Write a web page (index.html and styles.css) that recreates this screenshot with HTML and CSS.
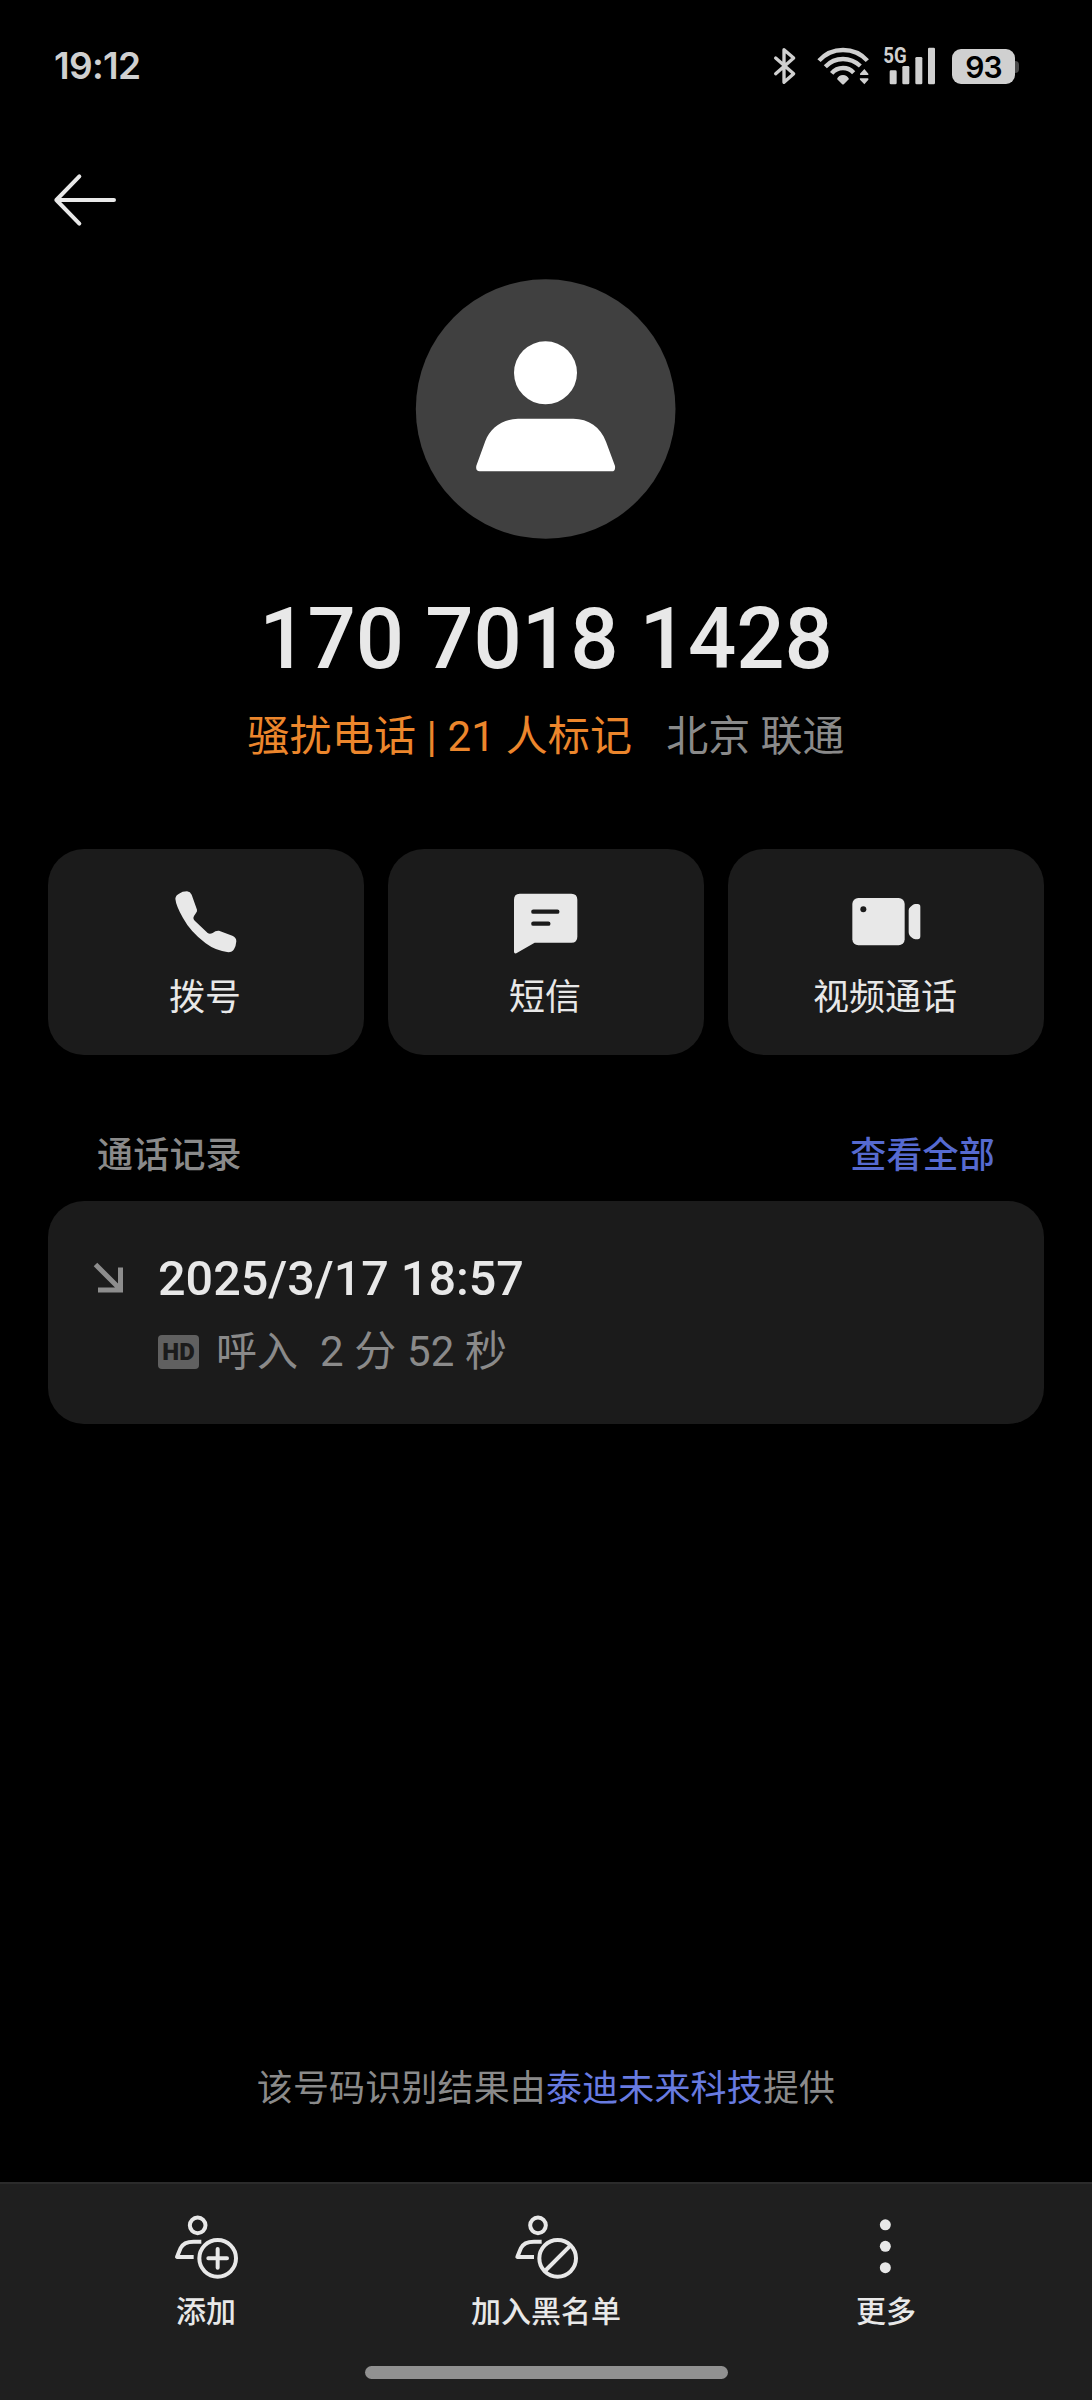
FILE: index.html
```html
<!DOCTYPE html>
<html lang="zh-CN">
<head>
<meta charset="utf-8">
<title>170 7018 1428</title>
<link rel="stylesheet" href="styles.css">
</head>
<body>
<div class="screen">
  <header class="status">
    <span class="clock">19:12</span>
    <div class="status-icons">
      <svg class="bluetooth" width="22" height="38" viewBox="72 80 66 114"><path d="M77 113 L131 160 L102 186 V88 L131 113 L77 160" fill="none" stroke="#d0d0d0" stroke-width="10" stroke-linejoin="round" stroke-linecap="round"/></svg>
      <svg class="wifi" width="53" height="38" viewBox="201 80 159 114">
        <g fill="none" stroke="#d0d0d0" stroke-width="13">
          <path d="M207 121 Q236 89 279 89 Q323 89 352 121"/>
          <path d="M226 139 Q248 116 279 116 Q308 116 331 137"/>
          <path d="M245 159 Q258 143 279 143 Q298 143 311 157"/>
        </g>
        <path fill="#d0d0d0" d="M261 176 Q266 164 279 164 Q291 164 297 176 L282 191 Q279 194 276 191Z M343 146 L355 160 Q357 164 353 164 H332 Q329 164 330 160Z M331 174 H353 Q357 175 355 178 L343 192 L330 178 Q328 174 331 174Z"/>
      </svg>
      <svg class="signal" width="53" height="39" viewBox="398 77 159 117">
        <g fill="#d0d0d0"><rect x="418" y="150" width="21" height="42" rx="4"/><rect x="456" y="137" width="21" height="55" rx="4"/><rect x="495" y="110" width="21" height="82" rx="4"/><rect x="533" y="82" width="21" height="110" rx="4"/></g>
        <text class="network" x="399" y="127" textLength="70" lengthAdjust="spacingAndGlyphs">5G</text>
      </svg>
      <div class="battery"><span class="battery-level">93</span><i class="battery-tip"></i></div>
    </div>
  </header>

  <nav class="back">
    <svg width="62" height="52" viewBox="161 460 186 156"><path d="M237 467 L168 538 L237 609 M168 538 H341" fill="none" stroke="#e8e8e8" stroke-width="12" stroke-linecap="round" stroke-linejoin="round"/></svg>
  </nav>

  <section class="profile">
    <svg class="avatar" width="260" height="260" viewBox="48 56 780 780">
      <circle cx="437" cy="446" r="389.500" fill="#404040"/>
      <circle cx="436.500" cy="337.500" r="94.500" fill="#fff"/>
      <path fill="#fff" d="M354 475 H520 C565 475 602 500 618 544 L645 617 Q647 633 635 633 H239 Q226 633 229 616 L256 542 C270 505 305 477 354 475Z"/>
    </svg>
    <h1 class="number">170 7018 1428</h1>
    <p class="caption"><span class="tag">骚扰电话 | 21 人标记</span><span class="place">北京 联通</span></p>
  </section>

  <section class="actions">
    <div class="action">
      <svg width="62" height="62" viewBox="434 181 186 186"><path fill="#e8e8e8" d="M446 189 Q456 182 470 182 Q480 183 484 192 L500 237 Q501 242 497 247 Q490 256 489 262 Q490 268 494 271 L532 307 Q538 312 547 307 Q556 299 566 300 L606 315 Q618 320 618 332 Q617 346 611 356 Q606 365 594 365 Q555 360 526 338 Q480 303 458 262 Q437 225 435 204 Q436 194 446 189Z"/></svg>
      <span>拨号</span>
    </div>
    <div class="action">
      <svg width="64" height="62" viewBox="431 182 192 186"><path fill="#e8e8e8" d="M448 190 H603 Q621 190 621 208 V319 Q621 337 603 337 H493 L438 369 Q431 371 431 364 V208 Q431 190 448 190Z"/><path d="M489 244 H561 M489 280 H534" stroke="#1b1b1b" stroke-width="13" stroke-linecap="round"/></svg>
      <span>短信</span>
    </div>
    <div class="action">
      <svg width="69" height="62" viewBox="428 182 207 186"><rect x="429" y="203" width="157" height="142" rx="18" fill="#e8e8e8"/><circle cx="462" cy="237" r="9" fill="#1b1b1b"/><path fill="#e8e8e8" d="M618 221 H625 Q633 221 633 229 V318 Q633 327 625 327 H618 Q612 326 608 322 L602 317 Q598 313 598 306 V240 Q598 234 603 230 L610 224 Q614 221 618 221Z"/></svg>
      <span>视频通话</span>
    </div>
  </section>

  <div class="section-head"><h2>通话记录</h2><a class="link">查看全部</a></div>
  <section class="log">
    <svg class="incoming" width="30" height="30" viewBox="0 0 30 30"><path d="M1.500 1.500 L26 26 M26.500 4.500 V27 H4" fill="none" stroke="#8d8d8d" stroke-width="5"/></svg>
    <div class="log-body">
      <div class="log-date">2025/3/17 18:57</div>
      <div class="log-detail"><span class="hd">HD</span><span>呼入</span><span class="duration">2 分 52 秒</span></div>
    </div>
  </section>

  <p class="source">该号码识别结果由<a>泰迪未来科技</a>提供</p>

  <footer class="toolbar">
    <div class="tools">
      <div class="tool">
        <svg width="64" height="64" viewBox="225 135 192 192"><g fill="none" stroke="#e8e8e8" stroke-width="12"><circle cx="296" cy="166" r="23.500"/><path d="M307 215 H284 Q254 215 245 234 Q239 248 234 261 H284" stroke-linejoin="round"/><circle cx="356" cy="265" r="55"/><path d="M328 265 H384 M356 237 V293" stroke-linecap="round"/></g></svg>
        <span>添加</span>
      </div>
      <div class="tool">
        <svg width="64" height="64" viewBox="223 135 192 192"><g fill="none" stroke="#e8e8e8" stroke-width="12"><circle cx="295" cy="166" r="23.500"/><path d="M306 215 H283 Q253 215 244 234 Q238 248 233 261 H283" stroke-linejoin="round"/><circle cx="354" cy="265" r="55"/><path d="M316 303 L392 227"/></g></svg>
        <span>加入黑名单</span>
      </div>
      <div class="tool">
        <svg width="64" height="64" viewBox="402 135 192 192"><g fill="#e8e8e8"><circle cx="496" cy="164.500" r="16.500"/><circle cx="496" cy="229" r="16.500"/><circle cx="496" cy="293" r="16.500"/></g></svg>
        <span>更多</span>
      </div>
    </div>
    <div class="handle"></div>
  </footer>
</div>
</body>
</html>
```
FILE: styles.css
```css
* { box-sizing: border-box; }
body, h1, h2, p { margin: 0; }
body { background: #000; }
svg { display: block; flex: none; overflow: visible; }

.screen {
  width: 1092px;
  height: 2400px;
  display: flex;
  flex-direction: column;
  background: #000;
  color: #e8e8e8;
  font-family: Roboto, "Noto Sans CJK SC", sans-serif;
  white-space: nowrap;
}

.status {
  height: 131px;
  padding: 0 77px 0 54px;
  display: flex;
  justify-content: space-between;
  align-items: center;
  color: #d0d0d0;
  font-family: Inter, sans-serif;
}
.clock { font-size: 37px; font-weight: 600; line-height: 44px; letter-spacing: -0.7px; }
.status-icons { display: flex; align-items: center; }
.wifi { margin-left: 21px; }
.signal { margin-left: 13px; }
.network { font: 700 66px Roboto, sans-serif; fill: #d0d0d0; }
.battery {
  position: relative;
  width: 63px;
  height: 35px;
  margin: 2px 0 0 16px;
  border-radius: 9px;
  background: #d0d0d0;
  color: #000;
  font-size: 30px;
  font-weight: 600;
  line-height: 36px;
  letter-spacing: -1px;
  text-align: center;
}
.battery-tip {
  position: absolute;
  left: 63px;
  top: 12px;
  width: 4px;
  height: 12px;
  border-radius: 0 4px 4px 0;
  background: #4a4a4a;
}

.back { height: 138px; padding-left: 54px; display: flex; align-items: center; }
.back svg { margin-top: -1px; }

.profile { padding-top: 10px; display: flex; flex-direction: column; align-items: center; }
.number { height: 102px; margin-top: 49px; font-size: 85px; font-weight: 500; line-height: 102px; }
.caption { height: 60px; margin-top: 17px; display: flex; gap: 34px; font-size: 42px; line-height: 60px; }
.tag { color: #ec862c; letter-spacing: 0.15px; }
.place { color: #8a8a8a; }

.actions { margin-top: 82px; padding: 0 48px; display: grid; grid-template-columns: repeat(3, 1fr); gap: 24px; }
.action {
  height: 206px;
  padding-top: 42px;
  display: flex;
  flex-direction: column;
  align-items: center;
  border-radius: 36px;
  background: #1b1b1b;
  font-size: 36px;
  line-height: 48px;
}
.action span { margin: 21px 2px 0 0; }

.section-head {
  height: 94px;
  margin-top: 52px;
  padding: 3px 97px 0;
  display: flex;
  justify-content: space-between;
  align-items: center;
  font-size: 36px;
  font-weight: 500;
  line-height: 48px;
}
.section-head h2 { font-size: 36px; font-weight: 500; color: #8a8a8a; letter-spacing: 0.2px; }
.section-head .link { color: #566ad0; letter-spacing: 0.2px; }

.log {
  height: 223px;
  margin: 0 48px;
  padding: 47px 46px 0;
  display: flex;
  gap: 34px;
  border-radius: 36px;
  background: #1b1b1b;
}
.incoming { margin-top: 15px; }
.log-date { font-size: 48.5px; font-weight: 500; line-height: 62px; }
.log-detail { margin-top: 12px; height: 60px; display: flex; align-items: center; color: #8a8a8a; font-size: 41px; line-height: 60px; }
.hd {
  width: 41px;
  height: 34px;
  margin-right: 17px;
  border-radius: 4px;
  background: #606060;
  color: #1b1b1b;
  font-size: 24px;
  font-weight: 900;
  line-height: 34px;
  text-align: center;
}
.duration { margin-left: 22px; font-size: 42px; letter-spacing: 0.15px; }

.source { margin-top: auto; margin-bottom: 69px; color: #8a8a8a; font-size: 36px; line-height: 48px; letter-spacing: 0.15px; text-align: center; }
.source a { color: #687be0; }

.toolbar { height: 218px; display: flex; flex-direction: column; align-items: center; border-top: 2px solid #2b2b2b; background: #1f1f1f; }
.tools { width: 100%; padding: 31px 48px 0; display: grid; grid-template-columns: repeat(3, 1fr); gap: 24px; }
.tool { display: flex; flex-direction: column; align-items: center; font-size: 30px; font-weight: 500; line-height: 40px; }
.tool span { margin-top: 13px; }
.handle { width: 363px; height: 13px; margin-top: 34px; border-radius: 7px; background: #919191; }
```
